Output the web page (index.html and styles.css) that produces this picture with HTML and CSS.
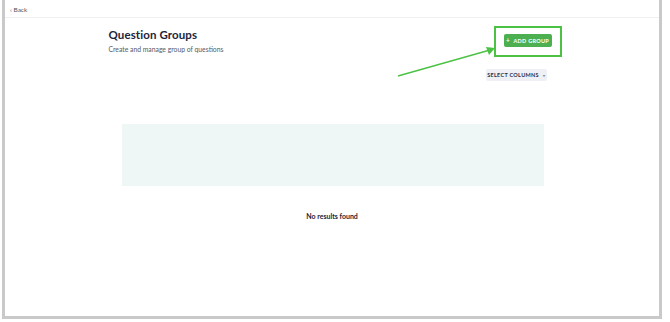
FILE: index.html
```html
<!DOCTYPE html>
<html lang="en">

<head>
  <meta charset="UTF-8">
  <meta name="viewport" content="width=device-width, initial-scale=1.0">
  <title>Question Groups</title>
  <link rel="stylesheet" href="styles.css">
</head>

<body>
  <div class="frame">
    <div class="topbar">
      <a href="#" class="back-link">&lsaquo; Back</a>
    </div>

    <div class="page">
      <div class="page-head">
        <div>
          <h2>Question Groups</h2>
          <p class="subtitle">Create and manage group of questions</p>
        </div>
        <div class="add-wrap">
          <button class="add-button"><span class="plus">+</span> ADD GROUP</button>
          <div class="highlight"></div>
        </div>
      </div>

      <div class="toolbar">
        <button class="columns-button">SELECT COLUMNS <span class="caret">&#9662;</span></button>
      </div>

      <div class="empty-table"></div>

      <p class="no-results">No results found</p>
    </div>

    <!-- annotation arrow -->
    <svg class="arrow" width="110" height="40" viewBox="0 0 110 40">
      <line x1="4" y1="36" x2="96" y2="10" stroke="#4cc244" stroke-width="1.4" />
      <polygon points="101,8 92,7 95,15" fill="#4cc244" />
    </svg>
  </div>
</body>

</html>
```

FILE: styles.css
```css
body {
  margin: 0;
  background-color: #fff;
  font-family: Lato, "Open Sans", sans-serif;
  color: #1f2233;
}

.frame {
  position: relative;
  margin-left: 2px;
  width: 654px;
  height: 316px;
  border: 3px solid #c9c9c9;
  border-top: none;
  background-color: #fff;
}

.topbar {
  display: flex;
  align-items: flex-start;
  height: 17px;
  border-bottom: 1px solid #f0f0f0;
  padding-left: 5px;
}

.back-link {
  margin-top: 6px;
  font-size: 6.5px;
  line-height: 8px;
  color: #555;
  text-decoration: none;
}

.page {
  width: 447px;
  margin: 0 auto;
}

.page-head {
  display: flex;
  justify-content: space-between;
  align-items: flex-start;
  padding-top: 9px;
}

h2 {
  margin: 0;
  font-size: 11.5px;
  font-weight: 700;
  color: #22243a;
  line-height: 16px;
  letter-spacing: 0.1px;
}

.subtitle {
  margin: 2px 0 0;
  font-size: 6.8px;
  color: #555a66;
}

.add-wrap {
  position: relative;
  margin-top: 7px;
  margin-right: 4px;
}

.add-button {
  display: block;
  width: 48px;
  height: 13px;
  padding: 0;
  border: none;
  border-radius: 2px;
  background-color: #4cb050;
  color: #fff;
  font-family: inherit;
  font-size: 5.5px;
  font-weight: 700;
  letter-spacing: 0.3px;
}

.plus {
  font-size: 6.5px;
  margin-right: 2px;
}

.highlight {
  position: absolute;
  left: -10px;
  top: -8px;
  width: 64px;
  height: 27px;
  border: 2px solid #4cc244;
}

.toolbar {
  display: flex;
  justify-content: flex-end;
  margin-top: 16px;
  padding-right: 9px;
}

.columns-button {
  height: 12px;
  width: 61px;
  padding: 0;
  border: none;
  border-radius: 2px;
  background-color: #eef0f6;
  color: #2c2f40;
  font-family: inherit;
  font-size: 5.5px;
  font-weight: 700;
  letter-spacing: 0.3px;
}

.caret {
  font-size: 4px;
  color: #888;
  margin-left: 2px;
}

.empty-table {
  margin: 43px 12px 0 13px;
  height: 62px;
  background-color: #eef7f6;
}

.no-results {
  margin: 26px 0 0;
  text-align: center;
  font-size: 7px;
  font-weight: 700;
  color: #1f2233;
}

.arrow {
  position: absolute;
  left: 389px;
  top: 40px;
}
```
